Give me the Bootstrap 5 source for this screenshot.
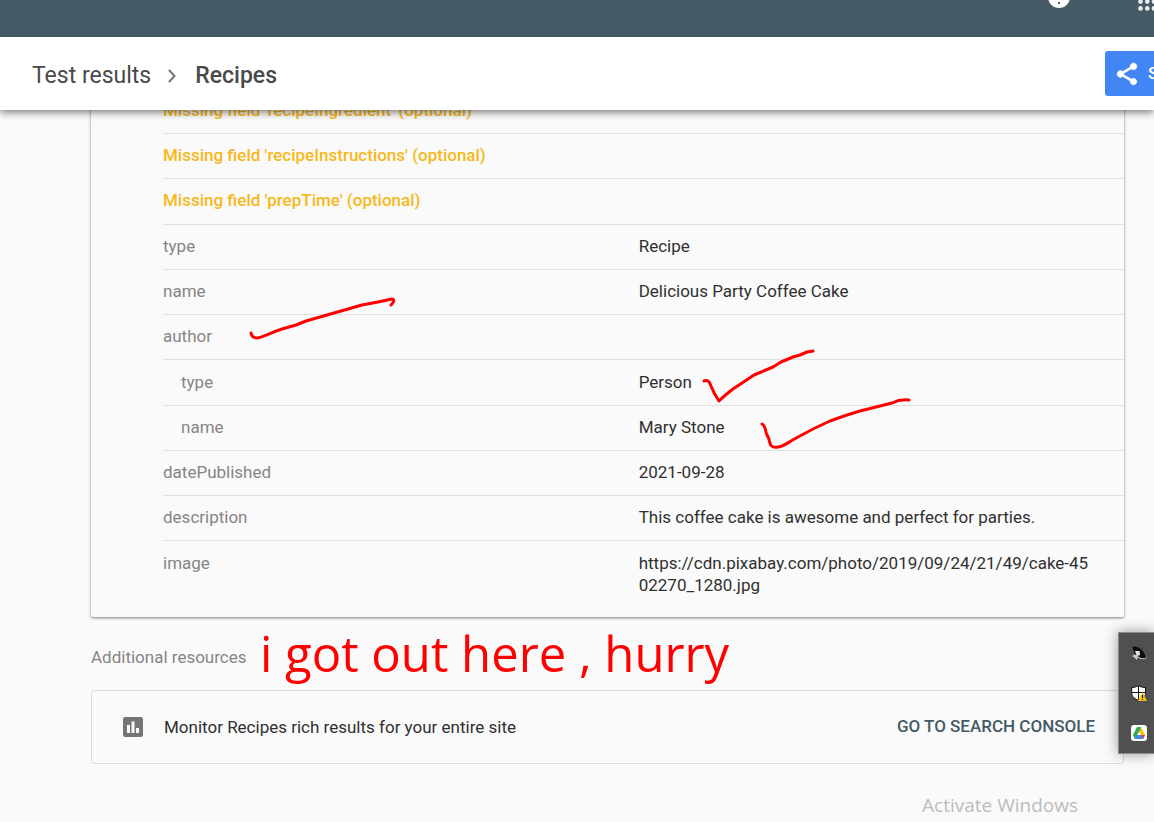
<!DOCTYPE html>
<html lang="en">
<head>
<meta charset="utf-8">
<meta name="viewport" content="width=device-width, initial-scale=1">
<title>Test results - Recipes</title>
<link href="https://cdn.jsdelivr.net/npm/bootstrap@5.3.0/dist/css/bootstrap.min.css" rel="stylesheet">
<style>
  body { background: #fafafa; color: #303030; font-family: Roboto, sans-serif; font-size: 17px; line-height: 22px; overflow-x: hidden; }
  .page { min-height: 100vh; overflow: hidden; }
  .top-bar { background: #455a64; height: 37px; overflow: hidden; }
  .help-icon { margin-right: 67px; }
  .sub-bar { background: #fff; height: 73px; padding-left: 32px; overflow: hidden; }
  .head-area { z-index: 2; box-shadow: 0 2px 8px rgba(0,0,0,.55); }
  .trail { font-size: 23px; line-height: 30px; color: #4a4a4a; padding-top: 4px; gap: 15px; }
  .trail a { color: inherit; }
  .trail-here { font-weight: 500; }
  .share-btn { background: #4285f4; color: #fff; height: 45px; width: 122px; margin-right: -73px; padding: 0 0 0 9px; border-radius: 3px; font-size: 17px; font-weight: 500; }
  .share-btn:hover { background: #3367d6; color: #fff; }
  main { padding: 0 30px 0 91px; display: flow-root; }
  .result-card { margin-top: -21px; padding: 0 0 9px 72px; border-radius: 2px; box-shadow: 0 1px 3px rgba(0,0,0,.5); }
  .fields { width: 100%; table-layout: fixed; border-collapse: separate; border-spacing: 0; }
  .fields th, .fields td { padding: 10px 0 12px; border-bottom: 1px solid #e0e0e0; font-weight: 400; vertical-align: top; }
  .fields th { color: #858585; }
  .fields th + td { padding-right: 32px; word-break: break-all; }
  .fields tr > .final { border-bottom: 0; padding-top: 11px; }
  .fields .warn { color: #f7b81a; font-weight: 500; }
  .warnings tr:last-child td { padding-bottom: 13px; }
  .fields .nested th { padding-left: 18px; }
  .nested tr:first-child > * { padding-top: 11px; }
  .col-name { width: 49.5%; }
  .extra { color: #858585; margin: 29px 0 22px; font-size: 17px; line-height: 22px; }
  .monitor { min-height: 74px; border: 1px solid #dadce0; border-radius: 3px; padding: 0 28px 0 29px; gap: 19px; }
  .console-link { color: #455a64; font-weight: 500; text-decoration: none; padding-bottom: 2px; }
  .ink { position: absolute; left: 0; top: 0; pointer-events: none; }
  .ink path { fill: none; stroke: #f00; stroke-width: 3; stroke-linecap: round; stroke-linejoin: round; }
  .note { position: absolute; left: 260px; top: 513px; color: #f00; font-family: "Open Sans", sans-serif; font-size: 49px; line-height: 60px; white-space: nowrap; }
  .tray { position: absolute; right: 0; top: 632px; width: 36px; padding: 12px 0 12px 12px; background: #505050; border: 1px solid #8a8a8a; border-right: 0; box-shadow: 0 0 14px rgba(0,0,0,.4); gap: 24px; z-index: 3; }
  .watermark { position: absolute; right: 76px; bottom: 5px; color: #bcbcbc; font-family: "Open Sans", sans-serif; font-size: 19px; line-height: 24px; }
</style>
</head>
<body>
<div class="page position-relative">
  <div class="head-area position-relative">
    <header class="top-bar d-flex justify-content-end align-items-start">
      <svg class="help-icon" width="24" height="9" viewBox="0 0 24 9" role="img" aria-label="Help"><circle cx="12" cy="-3" r="11" fill="#fff"/><rect x="11" y="2" width="2" height="2" fill="#455a64"/></svg>
      <svg width="16" height="12" viewBox="0 0 16 12" fill="#eceff1" role="img" aria-label="Apps"><circle cx="2.5" cy="1.6" r="2.3"/><circle cx="9.3" cy="1.6" r="2.3"/><circle cx="16" cy="1.6" r="2.3"/><circle cx="2.5" cy="8.4" r="2.3"/><circle cx="9.3" cy="8.4" r="2.3"/><circle cx="16" cy="8.4" r="2.3"/></svg>
    </header>
    <div class="sub-bar d-flex justify-content-between align-items-center">
      <nav class="trail d-flex align-items-center" aria-label="Breadcrumb">
        <a href="#" class="text-decoration-none">Test results</a>
        <svg width="14" height="16" viewBox="0 0 14 16" fill="none" stroke="#757575" stroke-width="2" aria-hidden="true"><path d="M3 2 8.500 8 3 14"/></svg>
        <span class="trail-here">Recipes</span>
      </nav>
      <button type="button" class="btn share-btn flex-shrink-0 d-flex align-items-center border-0">
        <svg width="26" height="26" viewBox="0 0 24 24" fill="#fff" stroke="#fff" stroke-width=".8" aria-hidden="true"><path d="M18 16.08c-.76 0-1.44.3-1.96.77L8.91 12.7c.05-.23.09-.46.09-.7s-.04-.47-.09-.7l7.05-4.11c.54.5 1.25.81 2.04.81 1.66 0 3-1.34 3-3s-1.34-3-3-3-3 1.34-3 3c0 .24.04.47.09.7L8.04 9.81C7.5 9.31 6.79 9 6 9c-1.66 0-3 1.34-3 3s1.34 3 3 3c.79 0 1.5-.31 2.04-.81l7.12 4.16c-.05.21-.08.43-.08.65 0 1.61 1.31 2.92 2.92 2.92s2.92-1.31 2.92-2.92-1.31-2.92-2.92-2.92z"/></svg>
        <span class="ms-2">SHARE</span>
      </button>
    </div>
  </div>

  <main class="position-relative">
    <section class="result-card">
      <table class="fields">
        <colgroup><col class="col-name"><col></colgroup>
        <tbody class="warnings">
          <tr><td colspan="2" class="warn">Missing field 'recipeIngredient' (optional)</td></tr>
          <tr><td colspan="2" class="warn">Missing field 'recipeInstructions' (optional)</td></tr>
          <tr><td colspan="2" class="warn">Missing field 'prepTime' (optional)</td></tr>
        </tbody>
        <tbody>
          <tr><th scope="row">type</th><td>Recipe</td></tr>
          <tr><th scope="row">name</th><td>Delicious Party Coffee Cake</td></tr>
          <tr><th scope="row">author</th><td></td></tr>
        </tbody>
        <tbody class="nested">
          <tr><th scope="row">type</th><td>Person</td></tr>
          <tr><th scope="row">name</th><td>Mary Stone</td></tr>
        </tbody>
        <tbody>
          <tr><th scope="row">datePublished</th><td>2021-09-28</td></tr>
          <tr><th scope="row">description</th><td>This coffee cake is awesome and perfect for parties.</td></tr>
          <tr><th scope="row" class="final">image</th><td class="final">https://cdn.pixabay.com/photo/2019/09/24/21/49/cake-4502270_1280.jpg</td></tr>
        </tbody>
      </table>
    </section>

    <h2 class="extra fw-normal">Additional resources</h2>
    <section class="monitor d-flex align-items-center">
      <svg width="24" height="24" viewBox="0 0 24 24" fill="#757575" aria-hidden="true"><path d="M20 2H4c-1.100 0-2 .9-2 2v16c0 1.100.9 2 2 2h16c1.100 0 2-.9 2-2V4c0-1.100-.9-2-2-2zM9 18H6v-8h3v8zm4.500 0h-3V6.500h3V18zm4.500 0h-3v-5h3v5z"/></svg>
      <span class="flex-grow-1">Monitor Recipes rich results for your entire site</span>
      <a href="#" class="console-link">GO TO SEARCH CONSOLE</a>
    </section>

    <!-- Hand-drawn ticks and note -->
    <svg class="ink" width="930" height="360" viewBox="0 110 930 360" aria-hidden="true">
      <path d="M251 333Q252 338 257 338C263 337 270 333 282 329L296 325 306 321 334 313 362 305 378 302 392 299Q396 300 391 305"/>
      <path d="M704 381Q709 379 711 386C714 394 717 398 719 401Q724 396 733 389L754 375 773 367 781 362 793 357 800 355 807 352 813 351"/>
      <path d="M762 424C766 426 765 431 767 435L769 439C770 446 772 448 778 447C783 447 785 444 798 437Q814 428 830 421Q846 415 860 411L892 403Q900 399 909 400"/>
    </svg>
    <div class="note">i got out here , hurry</div>
  </main>

  <aside class="tray d-flex flex-column" aria-label="Notification area">
    <svg width="16" height="16" viewBox="0 0 16 16" aria-hidden="true"><path d="M2 .8C8-.5 14 5 15.500 12 15 15 9 14 5 10 3 7 1 3 2 .8z" fill="#0c0c0c"/><path d="M2 .8C8 .3 14 6 15.500 12" fill="none" stroke="#888" stroke-width=".8"/><path d="M5 10C8 13.500 13 15 15.500 12.500" fill="none" stroke="#ddd" stroke-width="1"/><path d="M4 6 8.500 6 9 10 6 11z" fill="#e8e8e8"/><path d="M1 11 4 9.500 7 12.500 5.500 15 4 13z" fill="#ccc"/></svg>
    <svg width="16" height="16" viewBox="0 0 16 16" aria-hidden="true"><path d="M7.500.5C5.500 2 3 2.500.7 2.500V8c0 4 3.500 6 6.800 7.500C11 14 14.500 12 14.500 8V2.500C12 2.500 9.500 2 7.500.5z" fill="#fff" stroke="#111"/><path d="M7.500 1v14M1 7.500h13.500" stroke="#111"/><path d="M11.500 7 16 16H7z" fill="#ffc107"/><path d="M11.500 10v3M11.500 14v1" stroke="#111" stroke-width="1.200"/></svg>
    <svg width="16" height="16" viewBox="0 0 16 16" aria-hidden="true"><rect width="16" height="16" rx="3" fill="#fff"/><path d="M6 2h4l4 8h-4z" fill="#fbbc04"/><path d="M4.500 10H14l-2 4H4L2 10z" fill="#4285f4"/><path d="M10.500 10H14l-2 4z" fill="#ea4335"/><path d="M6 2 2 10l2 4 4-7 2-5z" fill="#34a853"/><path d="M8 7 6.300 10h3.400z" fill="#fff"/></svg>
  </aside>
  <div class="watermark">Activate Windows</div>
</div>
<script src="https://cdn.jsdelivr.net/npm/bootstrap@5.3.0/dist/js/bootstrap.bundle.min.js"></script>
</body>
</html>
